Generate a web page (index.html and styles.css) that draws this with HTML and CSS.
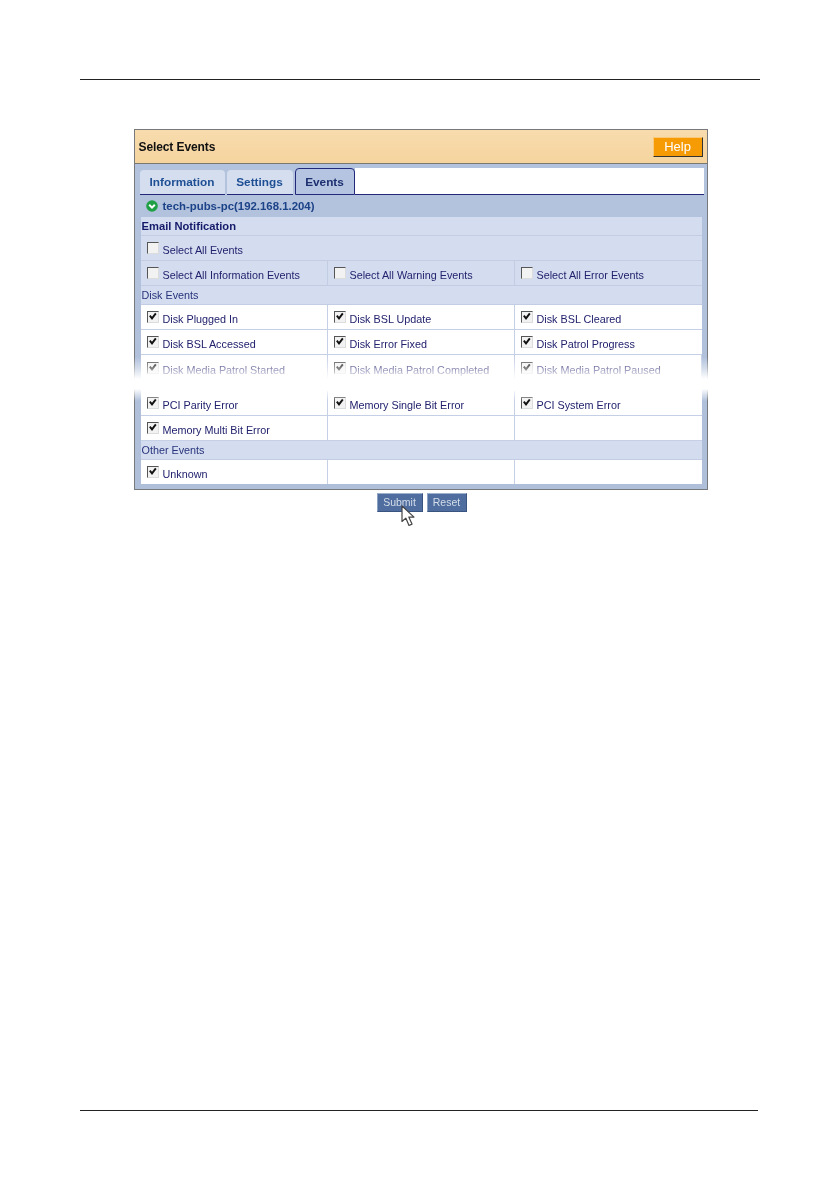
FILE: index.html
```html
<!DOCTYPE html>
<html lang="en">
<head>
<meta charset="utf-8">
<title>Select Events</title>
<link rel="stylesheet" href="styles.css">
</head>
<body>
<div class="page">
  <hr class="rule">
  <div class="window">
    <div class="titlebar"><span class="title">Select Events</span><span class="help">Help</span></div>
    <div class="panel">
      <div class="tabs">
        <span class="tab tab-info">Information</span>
        <span class="tab tab-settings">Settings</span>
        <span class="tab active">Events</span>
        <span class="tab-rest"></span>
      </div>
      <div class="server">
        <svg class="status" viewBox="0 0 12 12"><circle cx="6" cy="6" r="5.8" fill="#1fa045"/><path d="M3.2 4.8L6 7.6l2.8-2.8" fill="none" stroke="#fff" stroke-width="2"/></svg>
        <span>tech-pubs-pc(192.168.1.204)</span>
      </div>
      <div class="table">
        <div class="band band-h"><b>Email Notification</b></div>
        <div class="row shade single"><div class="cell"><span class="box"></span><span>Select All Events</span></div></div>
        <div class="row shade"><div class="cell"><span class="box"></span><span>Select All Information Events</span></div><div class="cell"><span class="box"></span><span>Select All Warning Events</span></div><div class="cell"><span class="box"></span><span>Select All Error Events</span></div></div>
        <div class="band">Disk Events</div>
        <div class="row"><div class="cell"><span class="box on"><svg viewBox="0 0 11 11"><path d="M2 4l2.4 3L8.6 1.6" /></svg></span><span>Disk Plugged In</span></div><div class="cell"><span class="box on"><svg viewBox="0 0 11 11"><path d="M2 4l2.4 3L8.6 1.6" /></svg></span><span>Disk BSL Update</span></div><div class="cell"><span class="box on"><svg viewBox="0 0 11 11"><path d="M2 4l2.4 3L8.6 1.6" /></svg></span><span>Disk BSL Cleared</span></div></div>
        <div class="row"><div class="cell"><span class="box on"><svg viewBox="0 0 11 11"><path d="M2 4l2.4 3L8.6 1.6" /></svg></span><span>Disk BSL Accessed</span></div><div class="cell"><span class="box on"><svg viewBox="0 0 11 11"><path d="M2 4l2.4 3L8.6 1.6" /></svg></span><span>Disk Error Fixed</span></div><div class="cell"><span class="box on"><svg viewBox="0 0 11 11"><path d="M2 4l2.4 3L8.6 1.6" /></svg></span><span>Disk Patrol Progress</span></div></div>
        <div class="row torn">
          <div class="cell"><span class="box on"><svg viewBox="0 0 11 11"><path d="M2 4l2.4 3L8.6 1.6" /></svg></span><span>Disk Media Patrol Started</span></div><div class="cell"><span class="box on"><svg viewBox="0 0 11 11"><path d="M2 4l2.4 3L8.6 1.6" /></svg></span><span>Disk Media Patrol Completed</span></div><div class="cell"><span class="box on"><svg viewBox="0 0 11 11"><path d="M2 4l2.4 3L8.6 1.6" /></svg></span><span>Disk Media Patrol Paused</span></div>
          <div class="tear"></div>
        </div>
        <div class="row"><div class="cell"><span class="box on"><svg viewBox="0 0 11 11"><path d="M2 4l2.4 3L8.6 1.6" /></svg></span><span>PCI Parity Error</span></div><div class="cell"><span class="box on"><svg viewBox="0 0 11 11"><path d="M2 4l2.4 3L8.6 1.6" /></svg></span><span>Memory Single Bit Error</span></div><div class="cell"><span class="box on"><svg viewBox="0 0 11 11"><path d="M2 4l2.4 3L8.6 1.6" /></svg></span><span>PCI System Error</span></div></div>
        <div class="row"><div class="cell"><span class="box on"><svg viewBox="0 0 11 11"><path d="M2 4l2.4 3L8.6 1.6" /></svg></span><span>Memory Multi Bit Error</span></div><div class="cell"></div><div class="cell"></div></div>
        <div class="band">Other Events</div>
        <div class="row last"><div class="cell"><span class="box on"><svg viewBox="0 0 11 11"><path d="M2 4l2.4 3L8.6 1.6" /></svg></span><span>Unknown</span></div><div class="cell"></div><div class="cell"></div></div>
      </div>
    </div>
  </div>
  <div class="actions">
    <span class="btn">Submit</span>
    <span class="btn">Reset</span>
    <svg class="cursor" viewBox="0 0 14 22"><path d="M1 1v15.5l3.8-3.4 3.2 7.4 3-1.4-3.2-7h5.2z" fill="#fff" stroke="#444" stroke-width="1.2" stroke-linejoin="round"/></svg>
  </div>
  <hr class="rule rule-foot">
</div>
</body>
</html>
```
FILE: styles.css
```css
html, body { margin: 0; padding: 0; background: #fff; }
body { font-family: "Liberation Sans", Arial, sans-serif; font-size: 10.8px; color: #22226e; }
.page { width: 840px; height: 1190px; display: flex; flex-direction: column; align-items: center; overflow: hidden; }
.rule { width: 680px; height: 1px; margin: 79px 0 0 0; border: 0; background: #222; flex: none; }
.rule-foot { margin: 597px 2px 0 0; width: 678px; }
.window { width: 572px; height: 359px; margin-top: 49px; margin-left: 1px; border: 1px solid #77797c; background: #b3c3de; display: flex; flex-direction: column; flex: none; filter: blur(0.3px); }
.titlebar { height: 34px; flex: none; background: linear-gradient(#f8dcae, #f5d49e); border-bottom: 1px solid #7a7770; display: flex; align-items: center; justify-content: space-between; padding: 1px 4px 0 4px; box-sizing: border-box; }
.title { font-weight: 700; font-size: 12px; color: #111; letter-spacing: -0.1px; }
.help { width: 50px; height: 20px; box-sizing: border-box; background: #f79b05; color: #fff; border: 1px solid #f9c878; border-right-color: #333; border-bottom-color: #333; font-size: 13px; line-height: 18px; text-align: center; }
.panel { flex: 1; display: flex; flex-direction: column; padding: 4px 5px 4px 6px; background: linear-gradient(#b3c3de, #afbfda); }
.tabs { height: 27px; flex: none; display: flex; align-items: flex-end; margin-left: -1px; margin-right: -2px; }
.tab { height: 25px; box-sizing: border-box; font-weight: 700; font-size: 11.8px; color: #1e4f94; background: #d5deef; border-radius: 4px 4px 0 0; border-bottom: 1px solid #23287a; text-align: center; line-height: 24px; margin-right: 2px; }
.tab-info { width: 85px; }
.tab-settings { width: 66px; }
.tab.active { width: 60px; height: 27px; line-height: 27px; margin-right: 0; color: #1c2f70; background: #b5c4e0; border: 1px solid #23287a; }
.tab-rest { flex: 1; height: 27px; background: #fff; border-bottom: 1px solid #23287a; box-sizing: border-box; }
.server { height: 22px; flex: none; display: flex; align-items: center; gap: 5px; padding-left: 5px; font-weight: 700; font-size: 11.4px; color: #1c4288; }
.status { width: 12px; height: 12px; }
.table { background: #fff; display: flex; flex-direction: column; flex: none; }
.band { height: 19px; box-sizing: border-box; background: #d4ddef; border-bottom: 1px solid #c2cde3; padding-left: 1px; line-height: 18px; color: #27337c; }
.band-h { color: #141a6a; }
.band-h b { font-size: 11.2px; }
.row { display: grid; grid-template-columns: 187px 187px 1fr; height: 25px; border-bottom: 1px solid #c5cfe6; box-sizing: border-box; position: relative; }
.row.single { grid-template-columns: 1fr; }
.row.shade { background: #d4ddef; border-bottom-color: #c2cde3; }
.row.last { border-bottom: 0; height: 24px; }
.row.torn { height: 36px; border-bottom: 0; align-items: start; }
.cell { display: flex; align-items: center; gap: 4px; padding: 3px 0 0 6px; box-sizing: border-box; border-right: 1px solid #c5cfe6; }
.torn .cell { height: 28px; padding-top: 2px; }
.shade .cell { border-right-color: #c2cde3; }
.cell:last-child { border-right: 0; }
.box { width: 12px; height: 12px; box-sizing: border-box; flex: none; background: #f2f2f2; border: 1px solid #dcdcdc; border-top-color: #555; border-left-color: #555; margin-top: -4px; display: block; }
.box svg { display: block; width: 10px; height: 10px; }
.box path { fill: none; stroke: #111; stroke-width: 2.1; }
.tear { position: absolute; z-index: 2; left: -10px; right: -10px; top: 2px; height: 44px; background: linear-gradient(rgba(255,255,255,0), rgba(255,255,255,.45) 25%, #fff 50%, #fff 72%, rgba(255,255,255,0)); }
.actions { display: flex; gap: 4px; margin: 3px 0 0 3px; height: 20px; flex: none; position: relative; filter: blur(0.3px); }
.btn { width: 46px; height: 19px; box-sizing: border-box; background: #4f6d9f; color: #d5deea; border-top: 1px solid #9db0cc; border-left: 1px solid #8ca2c2; border-right: 1px solid #39557f; border-bottom: 1px solid #39557f; font-size: 10.5px; line-height: 16px; text-align: center; }
.btn:last-of-type { width: 40px; }
.cursor { position: absolute; left: 24px; top: 12px; width: 14px; height: 22px; }
```
